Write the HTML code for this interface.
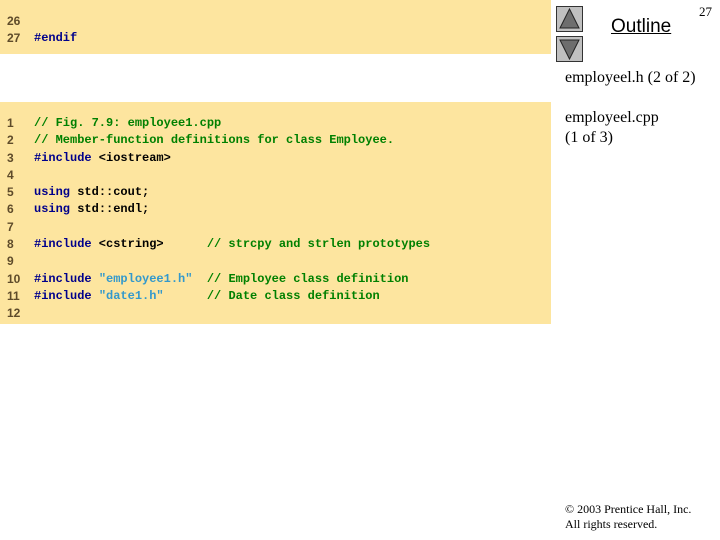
<!DOCTYPE html>
<html><head><meta charset="utf-8"><style>
body{margin:0;width:720px;height:540px;background:#fff;position:relative;overflow:hidden}
.box{position:absolute;left:0;width:551px;background:#fde59f}
.l{position:absolute;left:0;font:bold 12px "Liberation Mono",monospace;white-space:pre;line-height:14px;color:#000}
.n{position:absolute;left:7px;font:bold 12px "Liberation Sans",sans-serif;color:#5e4b2a;line-height:14px}
.c{color:#008000}.k{color:#00008b}.s{color:#3399cc}
.btn{position:absolute;left:556px;width:25px;height:24px;background:#c0c0c0;border:1px solid #333}
.r{position:absolute;font-family:"Liberation Serif",serif;color:#000}
</style></head><body>
<div class="box" style="top:0;height:54px"></div>
<div class="box" style="top:102px;height:222px"></div>
<div class="n" style="top:14px">26</div>
<div class="n" style="top:31px">27</div>
<div class="l" style="top:31px;left:34px"><span class="k">#endif</span></div>

<div class="n" style="top:116px">1</div>
<div class="n" style="top:133px">2</div>
<div class="n" style="top:151px">3</div>
<div class="n" style="top:168px">4</div>
<div class="n" style="top:185px">5</div>
<div class="n" style="top:202px">6</div>
<div class="n" style="top:220px">7</div>
<div class="n" style="top:237px">8</div>
<div class="n" style="top:254px">9</div>
<div class="n" style="top:272px;left:7px">10</div>
<div class="n" style="top:289px;left:7px">11</div>
<div class="n" style="top:306px;left:7px">12</div>

<div class="l" style="top:116px;left:34px"><span class="c">// Fig. 7.9: employee1.cpp</span></div>
<div class="l" style="top:133px;left:34px"><span class="c">// Member-function definitions for class Employee.</span></div>
<div class="l" style="top:151px;left:34px"><span class="k">#include</span> &lt;iostream&gt;</div>
<div class="l" style="top:185px;left:34px"><span class="k">using</span> std::cout;</div>
<div class="l" style="top:202px;left:34px"><span class="k">using</span> std::endl;</div>
<div class="l" style="top:237px;left:34px"><span class="k">#include</span> &lt;cstring&gt;      <span class="c">// strcpy and strlen prototypes</span></div>
<div class="l" style="top:272px;left:34px"><span class="k">#include</span> <span class="s">"employee1.h"</span>  <span class="c">// Employee class definition</span></div>
<div class="l" style="top:289px;left:34px"><span class="k">#include</span> <span class="s">"date1.h"</span>      <span class="c">// Date class definition</span></div>

<div class="btn" style="top:6px"><svg width="25" height="24"><polygon points="12.5,2 22,21 3,21" fill="#6e6e6e" stroke="#222" stroke-width="1"/></svg></div>
<div class="btn" style="top:36px"><svg width="25" height="24"><polygon points="3,3 22,3 12.5,22" fill="#6e6e6e" stroke="#222" stroke-width="1"/></svg></div>
<div style="position:absolute;left:611px;top:16px;font:19px 'Liberation Sans',sans-serif;text-decoration:underline;color:#000">Outline</div>
<div class="r" style="left:699px;top:4px;font-size:13px">27</div>
<div class="r" style="left:565px;top:69px;font-size:16px">employeel.h (2 of 2)</div>
<div class="r" style="left:565px;top:108px;font-size:16px;line-height:20px">employeel.cpp<br>(1 of 3)</div>
<div class="r" style="left:565px;top:502px;font-size:12px;line-height:15px">© 2003 Prentice Hall, Inc.<br>All rights reserved.</div>
</body></html>
